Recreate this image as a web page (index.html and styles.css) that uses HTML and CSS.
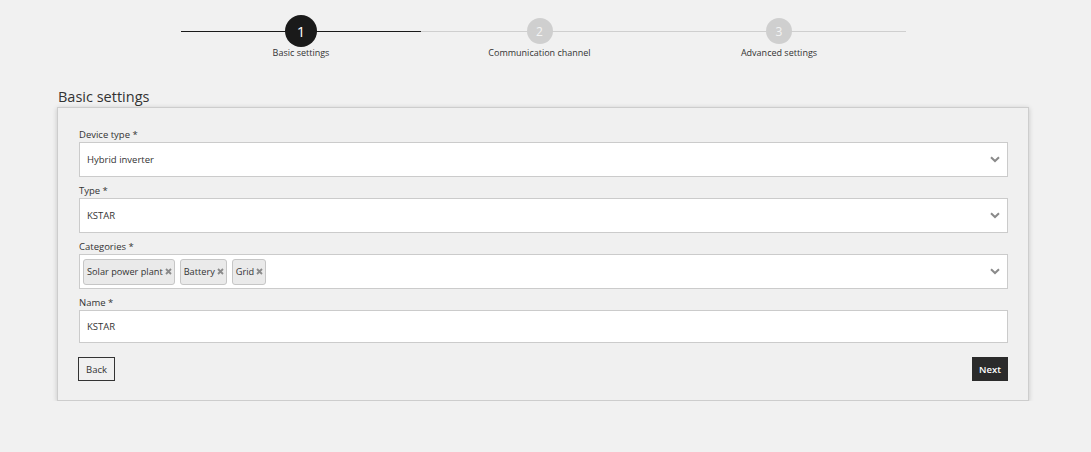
FILE: index.html
```html
<!DOCTYPE html>
<html>
<head>
<meta charset="utf-8">
<link rel="stylesheet" href="styles.css">
</head>
<body>
<div class="stepper">
  <div class="step step-done">
    <div class="track"><span class="dot dot-active">1</span></div>
    <div class="step-label">Basic settings</div>
  </div>
  <div class="step">
    <div class="track"><span class="dot">2</span></div>
    <div class="step-label">Communication channel</div>
  </div>
  <div class="step step-last">
    <div class="track"><span class="dot">3</span></div>
    <div class="step-label">Advanced settings</div>
  </div>
</div>

<h2 class="title">Basic settings</h2>
<div class="card">
  <div class="field">
    <label class="label">Device type *</label>
    <div class="select"><span class="value">Hybrid inverter</span><svg class="chev" width="10" height="7" viewBox="0 0 10 7"><path d="M1 1.2 L5 5 L9 1.2" fill="none" stroke="#8a8a8a" stroke-width="2"/></svg></div>
  </div>
  <div class="field">
    <label class="label">Type *</label>
    <div class="select"><span class="value">KSTAR</span><svg class="chev" width="10" height="7" viewBox="0 0 10 7"><path d="M1 1.2 L5 5 L9 1.2" fill="none" stroke="#8a8a8a" stroke-width="2"/></svg></div>
  </div>
  <div class="field">
    <label class="label">Categories *</label>
    <div class="select select-multi">
      <div class="tags">
        <span class="tag">Solar power plant<svg class="x" width="7" height="7" viewBox="0 0 7 7"><path d="M1 1 L6 6 M6 1 L1 6" stroke="#8a8a8a" stroke-width="1.8"/></svg></span>
        <span class="tag">Battery<svg class="x" width="7" height="7" viewBox="0 0 7 7"><path d="M1 1 L6 6 M6 1 L1 6" stroke="#8a8a8a" stroke-width="1.8"/></svg></span>
        <span class="tag">Grid<svg class="x" width="7" height="7" viewBox="0 0 7 7"><path d="M1 1 L6 6 M6 1 L1 6" stroke="#8a8a8a" stroke-width="1.8"/></svg></span>
      </div>
      <svg class="chev" width="10" height="7" viewBox="0 0 10 7"><path d="M1 1.2 L5 5 L9 1.2" fill="none" stroke="#8a8a8a" stroke-width="2"/></svg>
    </div>
  </div>
  <div class="field">
    <label class="label">Name *</label>
    <div class="input">KSTAR</div>
  </div>
  <div class="actions">
    <button class="btn btn-back">Back</button>
    <button class="btn btn-next">Next</button>
  </div>
</div>
</body>
</html>
```

FILE: styles.css
```css
* { box-sizing: border-box; }
body {
  margin: 0;
  background: #f1f1f1;
  font-family: "Open Sans", "Liberation Sans", sans-serif;
  color: #333;
}
.stepper {
  display: grid;
  grid-template-columns: 240px 239px 246px;
  margin: 15px 0 0 181px;
  width: 725px;
}
.step {
  display: flex;
  flex-direction: column;
  align-items: center;
}
.step-last { padding-right: 8px; }
.track {
  position: relative;
  width: 100%;
  height: 32px;
  display: flex;
  align-items: center;
  justify-content: center;
}
.track::before {
  content: "";
  position: absolute;
  left: 0;
  right: 0;
  top: 16px;
  height: 1px;
  background: #cfcfcf;
}
.step-last .track::before { right: -8px; }
.step-done .track::before { background: #1a1a1a; }
.dot {
  position: relative;
  width: 26px;
  height: 26px;
  border-radius: 50%;
  background: #cfcfcf;
  color: #f4f4f4;
  font-size: 12px;
  display: flex;
  align-items: center;
  justify-content: center;
}
.step:nth-child(2) .dot { margin-left: -2px; }
.dot-active {
  width: 32px;
  height: 32px;
  background: #1a1a1a;
  color: #fff;
  font-size: 15px;
}
.step-label {
  font-size: 9px;
  line-height: 12px;
  color: #333;
}
.step:nth-child(2) .step-label { margin-left: -2px; }
.title {
  margin: 28px 0 0 58px;
  font-size: 14.5px;
  font-weight: normal;
  line-height: 19px;
  color: #333;
}
.card {
  margin: 1px 0 0 57px;
  width: 972px;
  height: 294px;
  border: 1px solid #cdcdcd;
  background: #f0f0f0;
  box-shadow: 0 1px 5px rgba(0,0,0,0.18);
  padding: 20px 20px 19px 21px;
}
.field { margin-bottom: 7px; }
.label {
  display: block;
  font-size: 9.5px;
  line-height: 14px;
  color: #333;
}
.select, .input {
  height: 35px;
  background: #fff;
  border: 1px solid #cbcbcb;
  display: flex;
  align-items: center;
  padding: 0 7px 0 7px;
  font-size: 9.5px;
  color: #333;
}
.select { justify-content: space-between; }
.input { height: 33px; }
.select-multi { padding-left: 3px; }
.tags { display: flex; gap: 5px; }
.tag {
  display: flex;
  align-items: center;
  height: 26px;
  padding: 0 2px 0 3px;
  background: #eaeaea;
  border: 1px solid #c6c6c6;
  border-radius: 3px;
  font-size: 9.2px;
}
.x { margin-left: 2px; }
.actions {
  display: flex;
  justify-content: space-between;
  margin-top: 14px;
}
.btn {
  height: 24px;
  font-family: "Open Sans", "Liberation Sans", sans-serif;
  font-size: 9.5px;
  padding: 0 7px;
  cursor: pointer;
}
.btn-back {
  margin-left: -1px;
  background: transparent;
  border: 1px solid #333;
  color: #333;
}
.btn-next {
  padding: 0 6px;
  background: #2b2b2b;
  border: 1px solid #2b2b2b;
  color: #fff;
  font-weight: 600;
}
```
